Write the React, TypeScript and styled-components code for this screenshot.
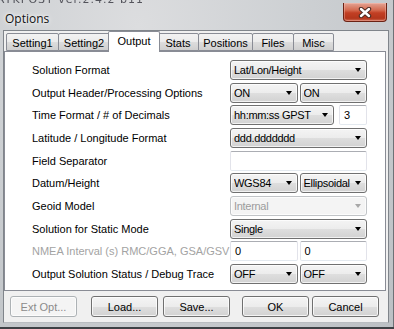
import styled, { createGlobalStyle } from "styled-components";

const Global = createGlobalStyle`
  html, body {
    margin: 0;
    padding: 0;
    width: 394px;
    height: 329px;
    overflow: hidden;
    background: #55585c;
  }
  body {
    font-family: "Liberation Sans", Arial, sans-serif;
    font-size: 11px;
    color: #000;
  }
`;

const Window = styled.div`
  position: relative;
  width: 394px;
  height: 329px;
  box-sizing: border-box;
  display: flex;
  flex-direction: column;
  padding: 0 5px 6px 3px;
  overflow: hidden;
  background: radial-gradient(ellipse at 35% 8%, #dcdddf 0%, #cdd0d3 45%, #bcc0c4 100%);
  box-shadow: inset 0 -2px 0 #3e4145, inset -1px 0 0 #6d7176;
`;

// 뒤쪽 창 제목이 유리창 너머로 흐릿하게 비침
const GhostTitle = styled.div`
  position: absolute;
  left: -3px;
  top: -7px;
  font-family: "DejaVu Sans", sans-serif;
  font-size: 11px;
  letter-spacing: 1px;
  color: rgba(25, 25, 35, 0.7);
  filter: blur(0.6px);
  white-space: nowrap;
`;

const TitleBar = styled.div`
  height: 30px;
  flex: none;
  display: flex;
  align-items: flex-start;
`;

const Title = styled.div`
  margin: 10px 0 0 2px;
  font-family: "Open Sans", "Noto Sans", sans-serif;
  font-size: 12px;
  color: #111;
  text-shadow: 0 0 6px rgba(255, 255, 255, 0.95), 0 0 3px rgba(255, 255, 255, 0.9);
  flex: 1;
`;

const CloseButton = styled.div`
  margin: 3px 2px 0 0;
  width: 44px;
  height: 19px;
  box-sizing: border-box;
  border: 1px solid #6b2214;
  border-top: none;
  border-radius: 0 0 4px 4px;
  background: linear-gradient(180deg, #e3a494 0%, #d4694e 40%, #c23f24 55%, #b3361c 85%, #cf6c53 100%);
  box-shadow: inset 0 0 0 1px rgba(255, 210, 200, 0.35);
  display: flex;
  align-items: center;
  justify-content: center;
`;

const Client = styled.div`
  flex: 1;
  display: flex;
  flex-direction: column;
  background: #f0f0f0;
  border: 1px solid #80858b;
  border-bottom-color: #b9bdc1;
`;

const TabRow = styled.div`
  height: 21px;
  display: flex;
  align-items: flex-end;
  padding-left: 2px;
  position: relative;
  z-index: 1;
  margin-bottom: -1px;
`;

const Tab = styled.div<{ $w: number; $active?: boolean }>`
  box-sizing: border-box;
  width: ${(p) => p.$w + (p.$active ? 4 : 0)}px;
  height: ${(p) => (p.$active ? 21 : 18)}px;
  margin-right: ${(p) => (p.$active ? -2 : 0)}px;
  margin-bottom: ${(p) => (p.$active ? 0 : 1)}px;
  margin-left: ${(p) => (p.$active ? -2 : -1)}px;
  position: relative;
  z-index: ${(p) => (p.$active ? 2 : 1)};
  display: flex;
  align-items: ${(p) => (p.$active ? "flex-start" : "center")};
  justify-content: center;
  padding-top: ${(p) => (p.$active ? 3 : 1)}px;
  border: 1px solid #898c95;
  border-bottom: ${(p) => (p.$active ? "none" : "1px solid #898c95")};
  border-radius: 2px 2px 0 0;
  background: ${(p) =>
    p.$active ? "#ffffff" : "linear-gradient(180deg, #f2f2f2 0%, #ebebeb 50%, #dddddd 51%, #cfcfcf 100%)"};
  &:first-child {
    margin-left: 0;
  }
`;

const Panel = styled.div`
  height: 240px;
  box-sizing: border-box;
  margin-right: 2px;
  background: #fff;
  border: 1px solid #898c95;
  padding: 8px 18px 0 27px;
  display: grid;
  grid-template-columns: 1fr 137px;
  grid-auto-rows: 20px;
  row-gap: 2.67px;
  align-items: center;
`;

const Label = styled.div<{ $disabled?: boolean }>`
  color: ${(p) => (p.$disabled ? "#a3a3a3" : "#000")};
  white-space: nowrap;
`;

const Controls = styled.div<{ $cols: string; $gap?: number }>`
  height: 20px;
  display: grid;
  grid-template-columns: ${(p) => p.$cols};
  column-gap: ${(p) => p.$gap ?? 2}px;
`;

const Combo = styled.div<{ $disabled?: boolean }>`
  box-sizing: border-box;
  height: 20px;
  display: flex;
  align-items: center;
  padding: 0 5px 0 3px;
  border: 1px solid ${(p) => (p.$disabled ? "#c1c4c7" : "#707070")};
  border-radius: 3px;
  color: ${(p) => (p.$disabled ? "#9c9c9c" : "#000")};
  letter-spacing: -0.3px;
  background: ${(p) =>
    p.$disabled
      ? "#f4f4f4"
      : "linear-gradient(180deg, #f4f4f4 0%, #ececec 50%, #dedede 51%, #d2d2d2 100%)"};
  box-shadow: inset 0 0 0 1px rgba(255, 255, 255, 0.7);
  white-space: nowrap;
  overflow: hidden;
`;

const ComboText = styled.span`
  flex: 1;
  overflow: hidden;
`;

const Arrow = styled.span<{ $disabled?: boolean }>`
  flex: none;
  width: 0;
  height: 0;
  margin-left: 2px;
  border-left: 3.5px solid transparent;
  border-right: 3.5px solid transparent;
  border-top: 4px solid ${(p) => (p.$disabled ? "#a8a8a8" : "#000")};
`;

const Edit = styled.div`
  box-sizing: border-box;
  height: 20px;
  display: flex;
  align-items: center;
  padding-left: 4px;
  background: #fff;
  border: 1px solid #e2e3ea;
  border-top-color: #abadb3;
  border-bottom-color: #e3e9ef;
  border-radius: 2px;
`;

const ButtonRow = styled.div`
  display: flex;
  margin-top: 5px;
  padding-left: 6px;
`;

const Button = styled.div<{ $ml?: number; $disabled?: boolean }>`
  box-sizing: border-box;
  width: 67px;
  height: 21px;
  margin-left: ${(p) => p.$ml ?? 0}px;
  display: flex;
  align-items: center;
  justify-content: center;
  border: 1px solid ${(p) => (p.$disabled ? "#adb2b5" : "#707070")};
  border-radius: 3px;
  color: ${(p) => (p.$disabled ? "#8b8b8b" : "#000")};
  background: ${(p) =>
    p.$disabled
      ? "#f4f4f4"
      : "linear-gradient(180deg, #f4f4f4 0%, #ececec 50%, #dedede 51%, #d2d2d2 100%)"};
  box-shadow: inset 0 0 0 1px rgba(255, 255, 255, 0.75);
`;

const Select = ({ value, disabled }: { value: string; disabled?: boolean }) => (
  <Combo $disabled={disabled}>
    <ComboText>{value}</ComboText>
    <Arrow $disabled={disabled} />
  </Combo>
);

const tabs = [
  { name: "Setting1", w: 53 },
  { name: "Setting2", w: 52 },
  { name: "Output", w: 48, active: true },
  { name: "Stats", w: 42 },
  { name: "Positions", w: 55 },
  { name: "Files", w: 42 },
  { name: "Misc", w: 41 },
];

export default function App() {
  return (
    <>
      <Global />
      <Window>
        <GhostTitle>RTKPOST ver.2.4.2 b11</GhostTitle>
        <TitleBar>
          <Title>Options</Title>
          <CloseButton>
            <svg width="14" height="11" viewBox="0 0 14 11">
              <path d="M3 2 L11 9 M11 2 L3 9" stroke="#4a2a22" strokeWidth="4.4" strokeLinecap="round" />
              <path d="M3 2 L11 9 M11 2 L3 9" stroke="#ffffff" strokeWidth="2.4" strokeLinecap="round" />
            </svg>
          </CloseButton>
        </TitleBar>
        <Client>
          <TabRow>
            {tabs.map((t) => (
              <Tab key={t.name} $w={t.w} $active={t.active}>
                {t.name}
              </Tab>
            ))}
          </TabRow>
          <Panel>
            <Label>Solution Format</Label>
            <Select value="Lat/Lon/Height" />

            <Label>Output Header/Processing Options</Label>
            <Controls $cols="1fr 1fr">
              <Select value="ON" />
              <Select value="ON" />
            </Controls>

            <Label>Time Format / # of Decimals</Label>
            <Controls $cols="1fr 28px" $gap={5}>
              <Select value="hh:mm:ss GPST" />
              <Edit>3</Edit>
            </Controls>

            <Label>Latitude / Longitude Format</Label>
            <Select value="ddd.ddddddd" />

            <Label>Field Separator</Label>
            <Edit />

            <Label>Datum/Height</Label>
            <Controls $cols="1fr 1fr">
              <Select value="WGS84" />
              <Select value="Ellipsoidal" />
            </Controls>

            <Label>Geoid Model</Label>
            <Select value="Internal" disabled />

            <Label>Solution for Static Mode</Label>
            <Select value="Single" />

            <Label $disabled>NMEA Interval (s) RMC/GGA, GSA/GSV</Label>
            <Controls $cols="1fr 1fr">
              <Edit>0</Edit>
              <Edit>0</Edit>
            </Controls>

            <Label>Output Solution Status / Debug Trace</Label>
            <Controls $cols="1fr 1fr">
              <Select value="OFF" />
              <Select value="OFF" />
            </Controls>
          </Panel>
          <ButtonRow>
            <Button $disabled>Ext Opt...</Button>
            <Button $ml={14}>Load...</Button>
            <Button $ml={5}>Save...</Button>
            <Button $ml={12}>OK</Button>
            <Button $ml={3}>Cancel</Button>
          </ButtonRow>
        </Client>
      </Window>
    </>
  );
}
